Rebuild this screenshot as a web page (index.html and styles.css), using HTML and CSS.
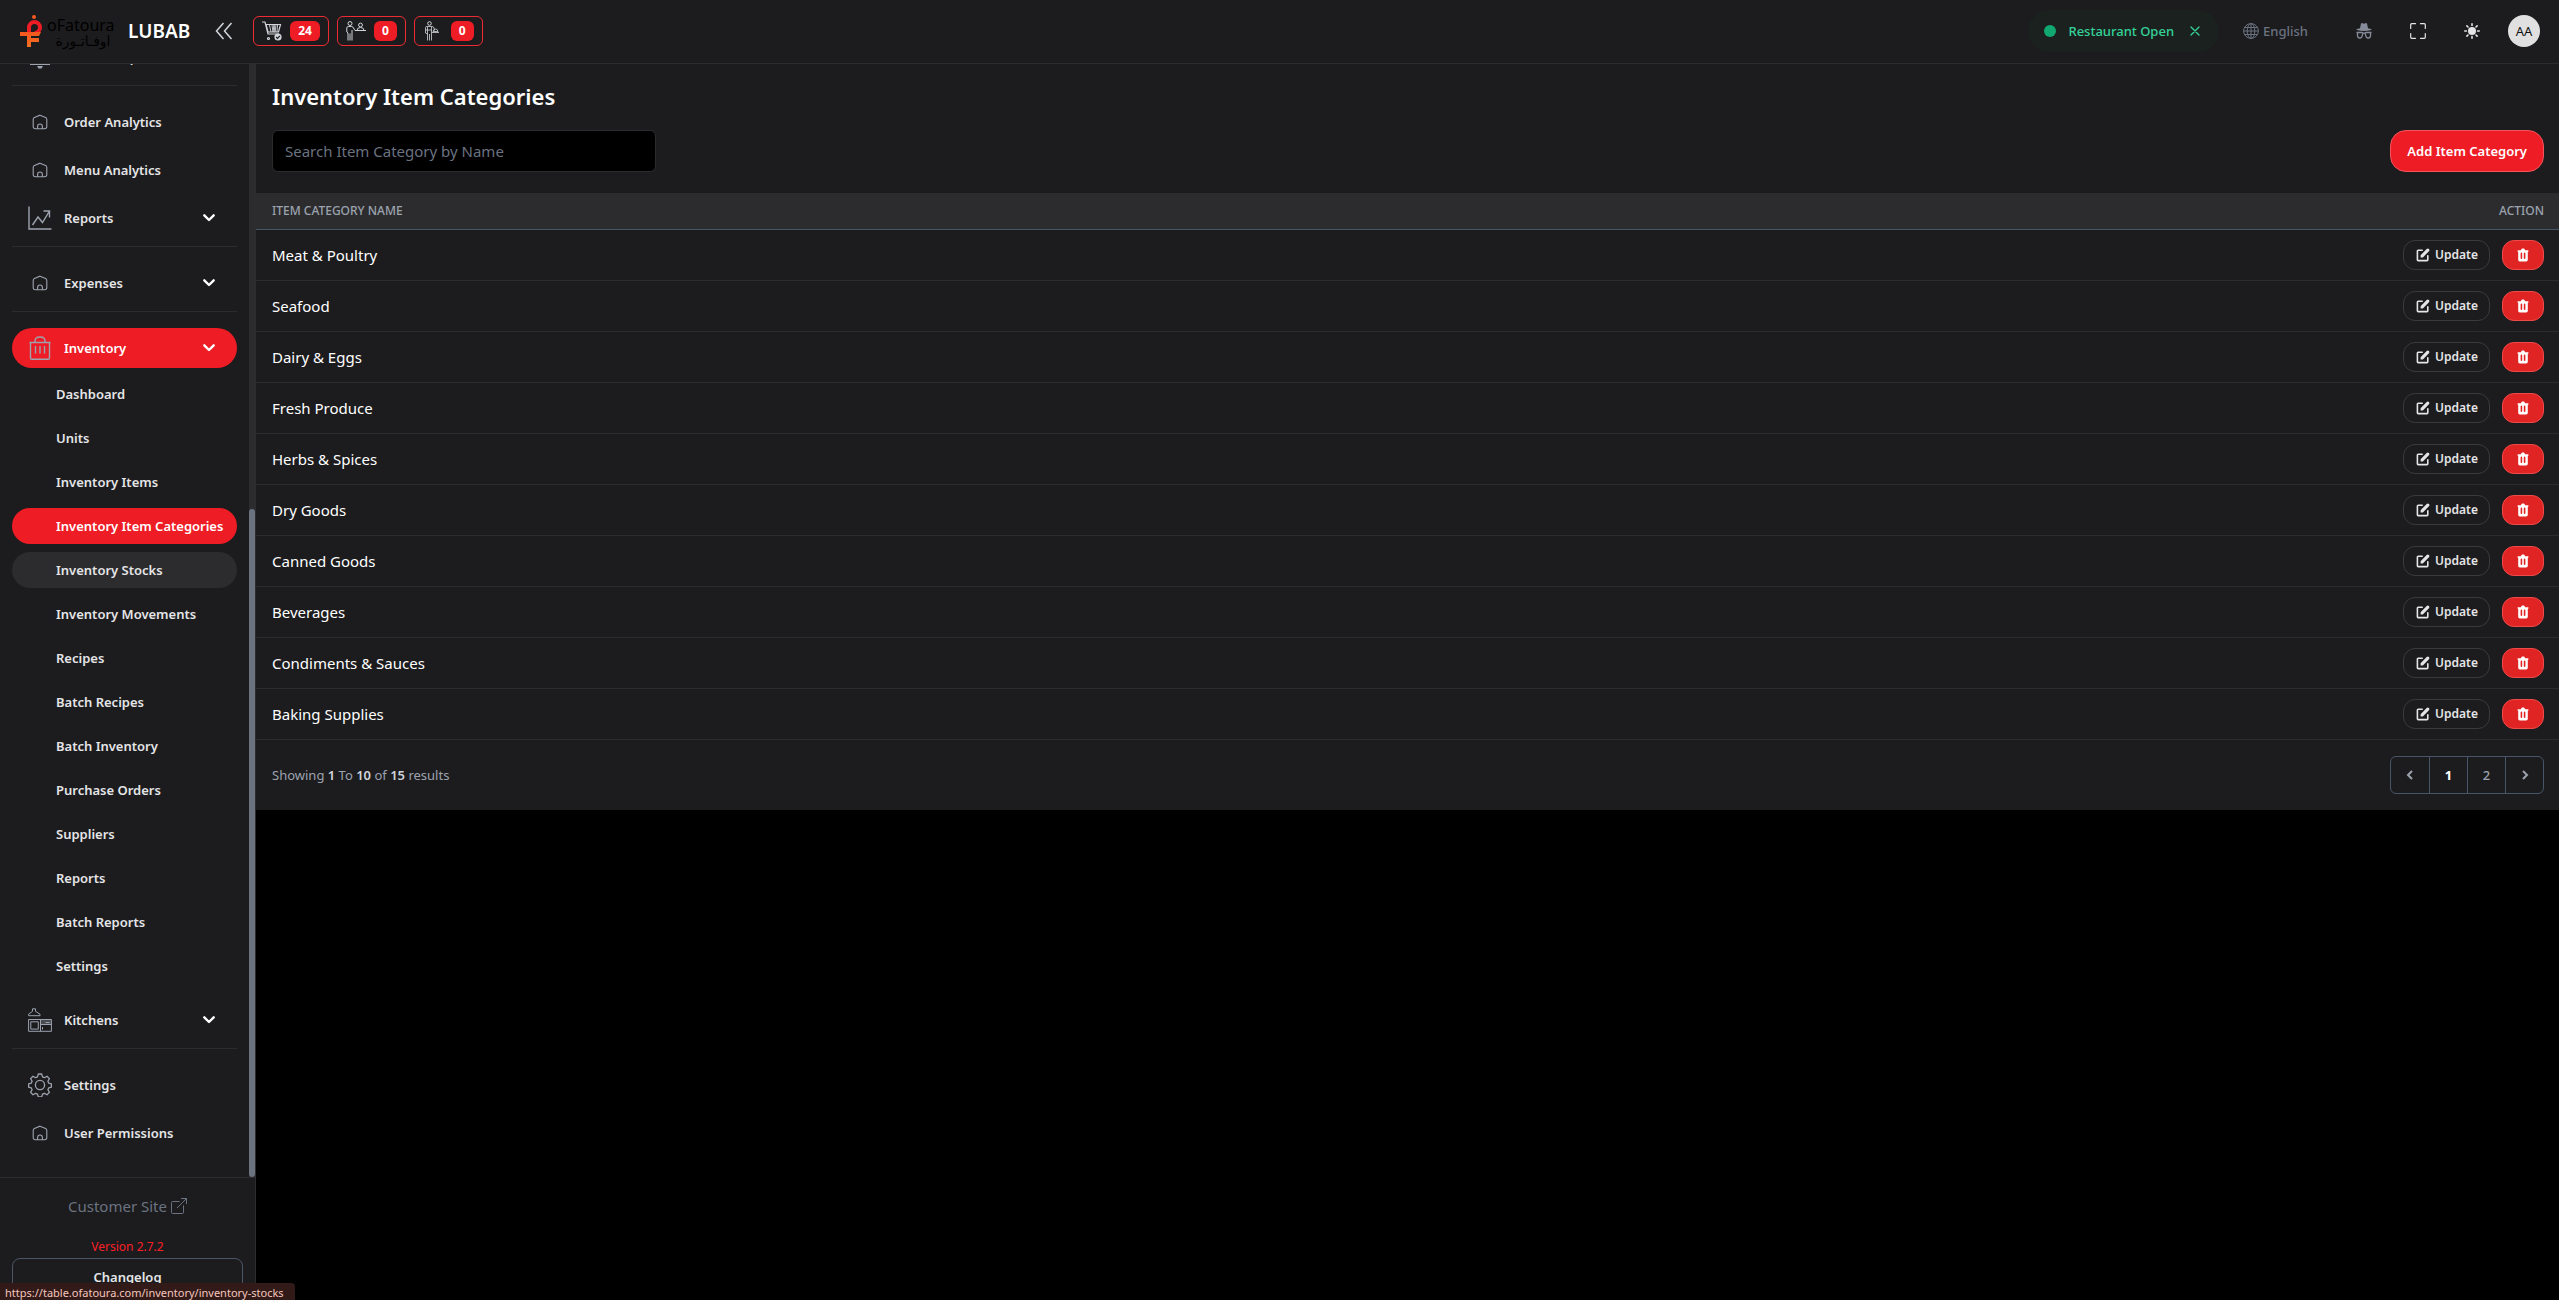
FILE: index.html
```html
<!DOCTYPE html>
<html lang="en">
<head>
    <meta charset="UTF-8">
    <meta name="viewport" content="width=device-width, initial-scale=1.0">
    <title>Inventory Item Categories</title>
    <link rel="stylesheet" href="styles.css">
</head>
<body>
    <!-- Shared icons -->
    <svg class="sprite" aria-hidden="true">
        <symbol id="i-home" viewBox="0 0 16 16">
            <path d="M8 1.2 13.6 3.6Q14.8 4.2 14.8 5.6V12.6Q14.8 14.8 12.6 14.8H3.4Q1.2 14.8 1.2 12.6V5.6Q1.2 4.2 2.4 3.6ZM5.6 14.8V12.4a2.4 2.4 0 0 1 4.8 0v2.4" fill="none" stroke="currentColor" stroke-width="1.1"/>
        </symbol>
        <symbol id="i-down" viewBox="0 0 20 20">
            <path d="m5.300 7.300 4.700 4.700 4.700-4.700" fill="none" stroke="currentColor" stroke-width="2.400" stroke-linecap="round" stroke-linejoin="round"/>
        </symbol>
        <symbol id="i-edit" viewBox="0 0 20 20">
            <path d="M17.400 2.600a2 2 0 0 0-2.800 0L7 10.200V13h2.800l7.600-7.600a2 2 0 0 0 0-2.800z" fill="currentColor"/>
            <path d="M9 4H4a1 1 0 0 0-1 1v11a1 1 0 0 0 1 1h11a1 1 0 0 0 1-1v-5" fill="none" stroke="currentColor" stroke-width="2" stroke-linecap="round"/>
        </symbol>
        <symbol id="i-trash" viewBox="0 0 20 20">
            <path fill="currentColor" fill-rule="evenodd" d="M9 2a1 1 0 0 0-.894.553L7.382 4H4a1 1 0 0 0 0 2v10a2 2 0 0 0 2 2h8a2 2 0 0 0 2-2V6a1 1 0 1 0 0-2h-3.382l-.724-1.447A1 1 0 0 0 11 2H9zM7 8a1 1 0 0 1 2 0v6a1 1 0 1 1-2 0V8zm5-1a1 1 0 0 0-1 1v6a1 1 0 1 0 2 0V8a1 1 0 0 0-1-1z"/>
        </symbol>
    </svg>

    <header class="topbar">
        <a href="#" class="brand">
            <svg class="brand-mark" viewBox="0 0 22 32" aria-hidden="true">
                <defs>
                    <linearGradient id="mark" x1="0" y1="0" x2="0" y2="1">
                        <stop offset="0" stop-color="#f4581f"/>
                        <stop offset="1" stop-color="#f37021"/>
                    </linearGradient>
                </defs>
                <circle cx="14" cy="2" r="2" fill="#f4581f"/>
                <path d="M9 18V12.500a5.500 5.500 0 1 1 5.500 5.500" fill="none" stroke="#ee1c25" stroke-width="4"/>
                <path d="M0 17h21l-2 4H11v2h8v4h-8v5H7V21H0z" fill="url(#mark)"/>
            </svg>
            <span class="brand-text">
                <span class="brand-en">oFatoura</span>
                <span class="brand-ar" lang="ar" dir="rtl">اوفـاتـورة</span>
            </span>
            <span class="brand-name">LUBAB</span>
        </a>
        <button type="button" class="collapse" aria-label="Collapse sidebar">
            <svg width="18" height="18" viewBox="0 0 18 18"><path d="M8.500 1 1.500 9l7 8M16.500 1l-7 8 7 8" fill="none" stroke="currentColor" stroke-width="1.500"/></svg>
        </button>

        <div class="counters">
            <a href="#" class="counter" aria-label="Orders">
                <svg width="20" height="20" viewBox="0 0 20 20" fill="none" stroke="currentColor" stroke-width="1.200">
                    <path d="M0 1h3l3 12h11M4 3.500h14.500l-2 7.500H6z"/>
                    <path d="M7.500 4l1.500 7M10 4l1 7 1-7 1 7 1-7M15.500 4 15 11" stroke-width=".9"/>
                    <circle cx="6.500" cy="17.500" r="1"/>
                    <circle cx="16" cy="16" r="3.600" fill="currentColor" stroke="none"/>
                    <path d="m14.200 16 1.300 1.300 2.400-2.400" stroke="#1c1c1e"/>
                </svg>
                <span class="badge">24</span>
            </a>
            <a href="#" class="counter" aria-label="Waiter requests">
                <svg width="20" height="20" viewBox="0 0 20 20" fill="none" stroke="currentColor">
                    <circle cx="4" cy="2.500" r="2"/>
                    <path d="M2 19.500V12L.8 11V7Q.8 5.500 2.500 5.500h3Q7 5.500 7.500 7l1.500 2.500h11M6 19.500V9M4 12.500v7"/>
                    <circle cx="14.500" cy="4" r="1.900"/>
                    <path d="M11 9.500q0-3 3.500-3t3.500 3"/>
                </svg>
                <span class="badge">0</span>
            </a>
            <a href="#" class="counter" aria-label="Reservations">
                <svg width="20" height="20" viewBox="0 0 20 20" fill="none" stroke="currentColor">
                    <circle cx="6.500" cy="2.500" r="1.800"/>
                    <path d="M4.500 19.500V13L2.500 12V6.500q0-1 1.500-1h5q1.500 0 2 1.500l.5 2.500M8.500 19.500V13M6.500 13v6.500M4.500 6v7M8.500 6v7M2.500 9h6M9 11.500h7M10 10.500q.5-2.500 2.500-2.500t2.500 2.500z" stroke-width=".8"/>
                </svg>
                <span class="badge">0</span>
            </a>
        </div>

        <div class="tools">
            <div class="status">
                <span class="status-dot"></span>
                <span>Restaurant Open</span>
                <button type="button" class="status-close" aria-label="Close restaurant">
                    <svg width="10" height="10" viewBox="0 0 10 10"><path d="m1 1 8 8M9 1 1 9" stroke="currentColor" stroke-width="1.300" stroke-linecap="round"/></svg>
                </button>
            </div>
            <button type="button" class="language">
                <svg width="16" height="16" viewBox="0 0 16 16" fill="none" stroke="currentColor"><circle cx="8" cy="8" r="7.400"/><ellipse cx="8" cy="8" rx="3.800" ry="7.400"/><path d="M8 .6v14.800M.6 8h14.800M1.600 4.500h12.800M1.600 11.500h12.800"/></svg>
                English
            </button>
            <button type="button" class="tool muted" aria-label="Impersonate">
                <svg width="16" height="16" viewBox="0 0 16 16">
                    <path d="M5 .6Q5.700-.2 6.600.3q1.400.7 2.800 0Q10.300-.2 11 .6L12 5.200 15 6q1.400.5 0 1-3 .9-7 .9T1 7q-1.400-.5 0-1l3-.8z" fill="currentColor"/>
                    <path d="M.5 9.500h5.200q1 0 1.300.7h2q.3-.7 1.300-.7h5.200M1.500 10v2.500q0 2.500 2.300 2.500t2.400-2.500L7 10.500M14.500 10v2.500q0 2.500-2.300 2.500t-2.400-2.500L9 10.500" fill="none" stroke="currentColor" stroke-width="1.300"/>
                </svg>
            </button>
            <button type="button" class="tool" aria-label="Fullscreen">
                <svg width="16" height="16" viewBox="0 0 16 16"><path d="M5.500.7H1.700q-1 0-1 1v3.800M10.500.7h3.800q1 0 1 1v3.800M.7 10.500v3.800q0 1 1 1h3.800M15.300 10.500v3.800q0 1-1 1h-3.800" fill="none" stroke="currentColor" stroke-width="1.200" stroke-linecap="round"/></svg>
            </button>
            <button type="button" class="tool" aria-label="Toggle theme">
                <svg width="16" height="16" viewBox="0 0 16 16"><circle cx="8" cy="8" r="4" fill="currentColor"/><path d="M8 .8v1.600M8 13.600v1.600M.8 8h1.600M13.600 8h1.600M2.900 2.900 4 4M12 12l1.100 1.100M2.900 13.100 4 12M12 4l1.100-1.100" stroke="currentColor" stroke-width="1.600" stroke-linecap="round"/></svg>
            </button>
            <button type="button" class="avatar">AA</button>
        </div>
    </header>

    <div class="layout">
        <aside class="sidebar">
            <div class="sidebar-body">
                <nav class="nav">
                    <a href="#" class="nav-item">
                        <svg viewBox="0 0 24 24" fill="currentColor"><path d="M3 16.500a9 9 0 0 1 18 0zM2 18.500h20V20H2zM9 21h6l-1.500 2.500h-3z"/></svg>
                        Waiter Requests
                    </a>
                    <hr>
                    <a href="#" class="nav-item"><svg class="small"><use href="#i-home"/></svg>Order Analytics</a>
                    <a href="#" class="nav-item"><svg class="small"><use href="#i-home"/></svg>Menu Analytics</a>
                    <button type="button" class="nav-item">
                        <svg viewBox="0 0 24 24" fill="none" stroke="currentColor" stroke-width="1.400"><path d="M1 .5V23h22.500M4.500 19 10 11l4.500 5.500L21.500 5M15.500 5h6v6.500"/></svg>
                        Reports
                        <svg class="arrow"><use href="#i-down"/></svg>
                    </button>
                    <hr>
                    <button type="button" class="nav-item">
                        <svg class="small"><use href="#i-home"/></svg>
                        Expenses
                        <svg class="arrow"><use href="#i-down"/></svg>
                    </button>
                    <hr>
                    <button type="button" class="nav-item active">
                        <svg viewBox="0 0 24 24" fill="none" stroke="currentColor" stroke-width="1.400"><path d="M1.500 6.500h21M2.500 6.500V22q0 1.300 1.300 1.300h16.400q1.300 0 1.300-1.300V6.500M7 6.500V5q0-4 5-4t5 4v1.500M7.500 10v7.500M12 10v7.500M16.500 10v7.500"/></svg>
                        Inventory
                        <svg class="arrow"><use href="#i-down"/></svg>
                    </button>
                    <div class="subnav">
                        <a href="#">Dashboard</a>
                        <a href="#">Units</a>
                        <a href="#">Inventory Items</a>
                        <a href="#" class="active">Inventory Item Categories</a>
                        <a href="#" class="hovered">Inventory Stocks</a>
                        <a href="#">Inventory Movements</a>
                        <a href="#">Recipes</a>
                        <a href="#">Batch Recipes</a>
                        <a href="#">Batch Inventory</a>
                        <a href="#">Purchase Orders</a>
                        <a href="#">Suppliers</a>
                        <a href="#">Reports</a>
                        <a href="#">Batch Reports</a>
                        <a href="#">Settings</a>
                    </div>
                    <button type="button" class="nav-item">
                        <svg viewBox="0 0 24 24" fill="none" stroke="currentColor"><path d="M4.500.8h3v2.500L12 6.200v1.500H.6V6.200l3.900-2.900zM.6 11.500h22.800v11.800H.6zM12.500 11.500v11.800M12.500 16.500h10.900M14.500 19v2.500"/><path d="M2.800 13.800h7.500v7.300H2.800z"/><path d="M12.500 11.500h10.900v5H12.500z" fill="currentColor" fill-opacity=".35" stroke="none"/><path d="M17.500 14.500h4"/></svg>
                        Kitchens
                        <svg class="arrow"><use href="#i-down"/></svg>
                    </button>
                    <hr>
                    <a href="#" class="nav-item">
                        <svg viewBox="0 0 24 24" fill="none" stroke="currentColor" stroke-width="1.300" stroke-linejoin="round"><circle cx="12" cy="12" r="4.600"/><path d="M10.300 1h3.400l.8 2.900 1.900.8 2.600-1.500 2.400 2.400-1.500 2.600.8 1.900 2.700.8v3.200l-2.700.8-.8 1.900 1.500 2.600-2.400 2.400-2.600-1.500-1.900.8-.8 2.900h-3.400l-.8-2.900-1.900-.8L5 21.800l-2.400-2.400 1.500-2.600-.8-1.900-2.700-.8v-3.200l2.700-.8.8-1.900L2.600 5.600 5 3.200l2.600 1.500 1.900-.8z"/></svg>
                        Settings
                    </a>
                    <a href="#" class="nav-item"><svg class="small"><use href="#i-home"/></svg>User Permissions</a>
                </nav>
                <div class="scrollbar"><div class="scrollbar-thumb"></div></div>
            </div>
            <div class="sidebar-footer">
                <a href="#" class="customer-link">
                    Customer Site
                    <svg width="16" height="16" viewBox="0 0 16 16"><path d="M8.600 3.500H1.500q-1 0-1 1v10q0 1 1 1h10q1 0 1-1V7.400M10 .5h5.500V6M15.500.5 6 10" fill="none" stroke="currentColor"/></svg>
                </a>
                <span class="version">Version 2.7.2</span>
                <button type="button" class="changelog">Changelog</button>
            </div>
        </aside>

        <main class="content">
            <section class="panel">
                <div class="panel-head">
                    <h1>Inventory Item Categories</h1>
                    <div class="panel-actions">
                        <input type="text" class="search" placeholder="Search Item Category by Name" aria-label="Search Item Category by Name">
                        <button type="button" class="btn btn-primary">Add Item Category</button>
                    </div>
                </div>

                <table>
                    <thead>
                        <tr><th>Item Category Name</th><th class="action">Action</th></tr>
                    </thead>
                    <tbody id="categories"></tbody>
                </table>

                <div class="panel-foot">
                    <p>Showing <b>1</b> To <b>10</b> of <b>15</b> results</p>
                    <div class="pagination">
                        <button type="button" aria-label="Previous"><svg width="20" height="20" viewBox="0 0 20 20"><path d="m12 6-4 4 4 4" fill="none" stroke="currentColor" stroke-width="2"/></svg></button>
                        <button type="button" class="current">1</button>
                        <button type="button">2</button>
                        <button type="button" aria-label="Next"><svg width="20" height="20" viewBox="0 0 20 20"><path d="m8 6 4 4-4 4" fill="none" stroke="currentColor" stroke-width="2"/></svg></button>
                    </div>
                </div>
            </section>
        </main>
    </div>

    <div class="link-status">https://table.ofatoura.com/inventory/inventory-stocks</div>

    <script>
        const categories = [
            'Meat & Poultry', 'Seafood', 'Dairy & Eggs', 'Fresh Produce', 'Herbs & Spices',
            'Dry Goods', 'Canned Goods', 'Beverages', 'Condiments & Sauces', 'Baking Supplies'
        ];

        const tbody = document.getElementById('categories');

        categories.forEach(function(name) {
            const row = tbody.insertRow();
            row.insertCell().textContent = name;

            const action = row.insertCell();
            action.className = 'action';
            action.innerHTML = `
                <div class="row-actions">
                    <button type="button" class="btn btn-update"><svg><use href="#i-edit"/></svg>Update</button>
                    <button type="button" class="btn btn-delete" aria-label="Delete"><svg><use href="#i-trash"/></svg></button>
                </div>
            `;
        });
    </script>
</body>
</html>
```
FILE: styles.css
```css
* {
    box-sizing: border-box;
}
body {
    margin: 0;
    height: 100vh;
    display: flex;
    flex-direction: column;
    overflow: hidden;
    background-color: #000;
    color: #e5e5e7;
    font-family: "Noto Sans", "Open Sans", sans-serif;
    font-size: 13px;
    line-height: 20px;
}
a {
    color: inherit;
    text-decoration: none;
}
button {
    padding: 0;
    border: none;
    background: none;
    color: inherit;
    font: inherit;
    cursor: pointer;
}
svg {
    display: block;
    flex-shrink: 0;
}
.sprite {
    display: none;
}

/* Top bar */
.topbar {
    display: flex;
    align-items: center;
    height: 64px;
    flex-shrink: 0;
    padding: 0 19px 2px 20px;
    background-color: #1c1c1e;
    border-bottom: 1px solid #2c2c2e;
}
.brand {
    display: flex;
    align-items: center;
}
.brand-mark {
    width: 22px;
    height: 32px;
}
.brand-text {
    display: flex;
    flex-direction: column;
    width: 72px;
    margin-left: 5px;
    padding-top: 6px;
    color: #000;
}
.brand-en {
    font-size: 16px;
    line-height: 14px;
}
.brand-ar {
    font-family: "DejaVu Sans", sans-serif;
    font-size: 14px;
    line-height: 18px;
    text-align: center;
}
.brand-name {
    margin-left: 9px;
    color: #fff;
    font-size: 19px;
    font-weight: 600;
}
.collapse {
    margin-left: 25px;
    color: #d1d5db;
}
.counters {
    display: flex;
    gap: 8px;
    margin-left: 20px;
}
.counter {
    display: flex;
    align-items: center;
    gap: 8px;
    height: 30px;
    padding: 0 8px;
    border: 1px solid #ee2b33;
    border-radius: 6px;
    color: #d1d5db;
}
.badge {
    padding: 0 8px;
    border-radius: 6px;
    background-color: #ee1c25;
    color: #fff;
    font-size: 12px;
    font-weight: 700;
}
.tools {
    display: flex;
    align-items: center;
    margin-left: auto;
}
.status {
    display: flex;
    align-items: center;
    height: 42px;
    padding: 0 19px 0 16px;
    border-radius: 21px;
    background-color: #1b211f;
    color: #34d399;
    font-weight: 500;
}
.status-dot {
    width: 12px;
    height: 12px;
    margin-right: 12px;
    border-radius: 50%;
    background-color: #10a870;
}
.status-close {
    margin-left: 16px;
}
.language {
    display: flex;
    align-items: center;
    gap: 4px;
    margin: 0 29px 0 24px;
    color: #6b7280;
    font-weight: 500;
}
.tool {
    display: flex;
    justify-content: center;
    width: 54px;
    color: #e5e5e7;
}
.tool.muted {
    color: #858b99;
}
.avatar {
    width: 32px;
    height: 32px;
    margin-left: 9px;
    border-radius: 50%;
    background-color: #e0e0e0;
    color: #111;
}

/* Sidebar */
.layout {
    display: flex;
    flex: 1;
    min-height: 0;
}
.sidebar {
    display: flex;
    flex-direction: column;
    flex-shrink: 0;
    width: 256px;
    background-color: #1c1c1e;
    border-right: 1px solid #2c2c2e;
}
.sidebar-body {
    display: flex;
    flex: 1;
    min-height: 0;
}
.nav {
    display: flex;
    flex: 1;
    flex-direction: column;
    justify-content: flex-end;
    gap: 8px;
    padding: 0 12px 24px;
    overflow: hidden;
    font-weight: 600;
}
.nav hr {
    width: 100%;
    margin: 0 0 8px;
    border: none;
    border-top: 1px solid #2c2c2e;
}
.nav-item {
    display: flex;
    flex-shrink: 0;
    align-items: center;
    gap: 12px;
    height: 40px;
    padding: 0 18px 0 16px;
    border-radius: 20px;
}
.nav-item svg {
    width: 24px;
    height: 24px;
    color: #9ca3af;
}
.nav-item svg.small {
    width: 16px;
    height: 16px;
    margin: 0 4px;
}
.nav-item svg.arrow {
    width: 20px;
    height: 20px;
    margin-left: auto;
    color: #fff;
}
.nav .active {
    background-color: #ee1c25;
    color: #fff;
}
.subnav {
    display: flex;
    flex-direction: column;
    flex-shrink: 0;
    gap: 8px;
    margin-bottom: 8px;
}
.subnav a {
    padding: 8px 8px 8px 44px;
    border-radius: 18px;
    white-space: nowrap;
}
.subnav .hovered {
    background-color: #2c2c2e;
}
.scrollbar {
    display: flex;
    flex-direction: column;
    justify-content: flex-end;
    width: 6px;
    background-color: #2c2c2e;
}
.scrollbar-thumb {
    height: 60%;
    border-radius: 3px;
    background-color: #6b7280;
}
.sidebar-footer {
    display: flex;
    flex-direction: column;
    align-items: center;
    height: 123px;
    padding: 16px 12px 0;
    border-top: 1px solid #2c2c2e;
}
.customer-link {
    display: flex;
    align-items: center;
    gap: 4px;
    color: #6b7280;
    font-size: 15px;
    line-height: 24px;
}
.version {
    margin-top: 21px;
    color: #fb1f28;
    font-size: 12px;
    line-height: 16px;
}
.changelog {
    flex-shrink: 0;
    width: 100%;
    height: 38px;
    margin-top: 3px;
    border: 1px solid #4b5563;
    border-radius: 8px;
    font-weight: 600;
}

/* Content */
.content {
    flex: 1;
    min-width: 0;
}
.panel {
    background-color: #1c1c1e;
}
.panel-head {
    padding: 16px 15px 21px 16px;
}
h1 {
    margin: 0 0 18px;
    color: #fff;
    font-size: 22px;
    font-weight: 600;
    line-height: 32px;
}
.panel-actions {
    display: flex;
    align-items: flex-start;
    justify-content: space-between;
}
.search {
    width: 384px;
    height: 42px;
    padding: 0 12px;
    border: 1px solid #2c2c2e;
    border-radius: 6px;
    background-color: #000;
    color: #fff;
    font: inherit;
    font-size: 15px;
}
.search::placeholder {
    color: #6b7280;
}
.btn {
    display: flex;
    align-items: center;
    justify-content: center;
    border-radius: 12px;
    font-weight: 600;
}
.btn svg {
    width: 16px;
    height: 16px;
}
.btn-primary {
    height: 42px;
    padding: 0 16px;
    border: 1px solid #f2555c;
    border-radius: 16px;
    background-color: #ee1c25;
    color: #fff;
}
.btn-update {
    gap: 4px;
    height: 30px;
    padding: 0 11px;
    border: 1px solid #3a3a3d;
    font-size: 12px;
}
.btn-delete {
    width: 42px;
    height: 30px;
    border: 1px solid #ee4a4a;
    background-color: #e02424;
    color: #fff;
}
table {
    width: 100%;
    border-collapse: collapse;
}
th {
    height: 36px;
    padding: 0 16px;
    border-bottom: 1px solid #475569;
    background-color: #2c2c2e;
    color: #9ca3af;
    font-size: 12px;
    font-weight: 500;
    text-align: left;
    text-transform: uppercase;
}
td {
    height: 51px;
    padding: 0 16px;
    border-bottom: 1px solid #2c2c2e;
    color: #fff;
    font-size: 15px;
}
.action {
    padding-right: 15px;
    text-align: right;
}
.row-actions {
    display: flex;
    justify-content: flex-end;
    gap: 12px;
    color: #e5e5e7;
}
.panel-foot {
    display: flex;
    align-items: center;
    justify-content: space-between;
    padding: 16px 15px 16px 16px;
    color: #9ca3af;
}
.panel-foot p {
    margin: 0;
}
.panel-foot b {
    color: #d1d5db;
    font-weight: 600;
}
.pagination {
    display: flex;
    border: 1px solid #475569;
    border-radius: 6px;
}
.pagination button {
    display: flex;
    align-items: center;
    justify-content: center;
    width: 38px;
    height: 36px;
    color: #9ca3af;
    font-weight: 500;
}
.pagination button + button {
    border-left: 1px solid #475569;
}
.pagination .current {
    color: #fff;
    font-weight: 700;
}

/* Link preview in the corner of the window */
.link-status {
    position: absolute;
    bottom: 0;
    left: 0;
    padding: 2px 11px 0 5px;
    border-radius: 0 4px 0 0;
    background-color: #321a19;
    color: #f5c6bd;
    font-size: 11px;
    line-height: 15px;
}
```
